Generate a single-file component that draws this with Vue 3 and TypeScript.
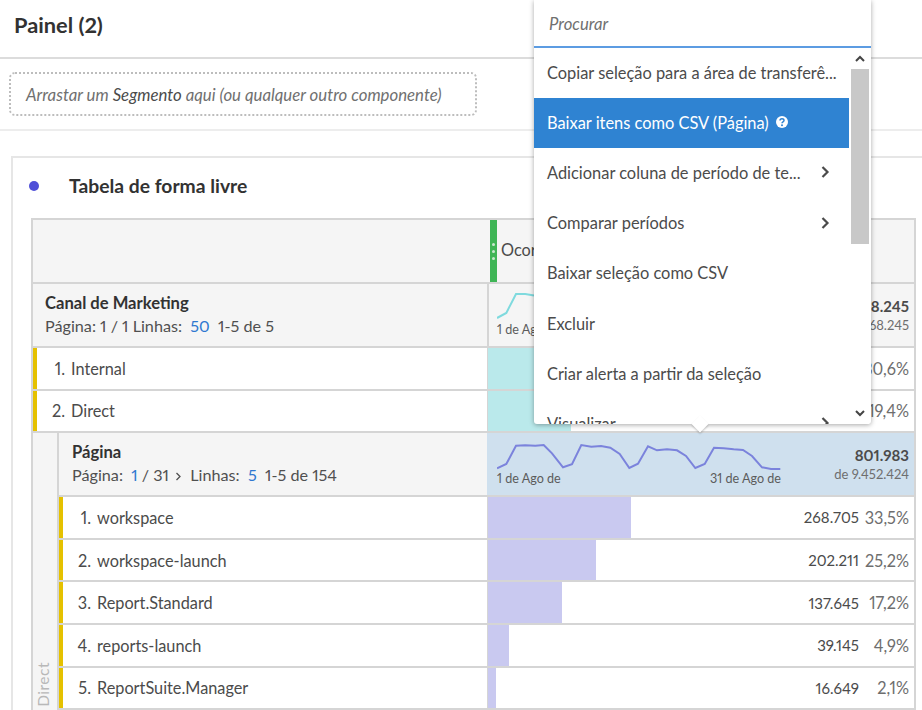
<script setup lang="ts">
interface Row {
  n: number
  label: string
  bar: number
  value?: string
  pct: string
}

const channelRows: Row[] = [
  { n: 1, label: 'Internal', bar: 131, pct: '30,6%' },
  { n: 2, label: 'Direct', bar: 83, pct: '19,4%' }
]

const pageRows: Row[] = [
  { n: 1, label: 'workspace', bar: 143, value: '268.705', pct: '33,5%' },
  { n: 2, label: 'workspace-launch', bar: 108, value: '202.211', pct: '25,2%' },
  { n: 3, label: 'Report.Standard', bar: 74, value: '137.645', pct: '17,2%' },
  { n: 4, label: 'reports-launch', bar: 21, value: '39.145', pct: '4,9%' },
  { n: 5, label: 'ReportSuite.Manager', bar: 8, value: '16.649', pct: '2,1%' }
]

const menu = [
  { label: 'Copiar seleção para a área de transferê...' },
  { label: 'Baixar itens como CSV (Página)', active: true, help: true },
  { label: 'Adicionar coluna de período de te...', more: true },
  { label: 'Comparar períodos', more: true },
  { label: 'Baixar seleção como CSV' },
  { label: 'Excluir' },
  { label: 'Criar alerta a partir da seleção' },
  { label: 'Visualizar', more: true }
]

const pageSpark = '0,35.3 9.3,31 19,12.7 28.3,12.3 38.3,12.7 46.7,12 55,20.3 66,34.3 75,31.3 84.3,12 94.3,13.7 104,13 113.3,14.7 122.7,21 132.3,35 141,30.7 151,13.3 160,17.3 170,16.3 180,17.3 189,23 198.3,35 207.7,31 217,14.7 226.7,15.3 236.7,16.3 246,17 255,23 265,34.3 274,36 283.3,36'
const channelSpark = '0,34 9.3,29 19,10 28.3,10 37,11.5'
</script>

<template>
  <div class="page">
    <header class="topbar">Painel (2)</header>

    <div class="drop-section">
      <div class="dropzone">Arrastar um&nbsp;<b>Segmento</b>&nbsp;aqui (ou qualquer outro componente)</div>
    </div>

    <section class="card">
      <div class="card-title">
        <span class="dot"></span>
        <h2>Tabela de forma livre</h2>
      </div>

      <div class="table">
        <div class="row head-row">
          <div class="left"></div>
          <div class="right metric-head">
            <span class="grip"><i></i><i></i><i></i></span>
            <span class="metric-name">Ocorrências</span>
          </div>
        </div>

        <div class="row dim-row">
          <div class="left dim-cell">
            <strong>Canal de Marketing</strong>
            <p>Página: 1 / 1 Linhas:&nbsp; <a>50</a>&nbsp; 1-5 de 5</p>
          </div>
          <div class="right summary">
            <div class="spark">
              <svg width="284" height="50" viewBox="0 0 284 50">
                <polyline :points="channelSpark" fill="none" stroke="#7fdade" stroke-width="2" />
              </svg>
              <div class="spark-dates"><span>1 de Ago de</span></div>
            </div>
            <div class="totals">
              <b>1.468.245</b>
              <small>de 1.468.245</small>
            </div>
          </div>
        </div>

        <div v-for="r in channelRows" :key="r.n" class="row item-row">
          <div class="left item-cell">
            <span class="num">{{ r.n }}.</span>
            <span>{{ r.label }}</span>
          </div>
          <div class="right bar-cell">
            <span class="bar teal" :style="{ width: r.bar + 'px' }"></span>
            <span class="pct">{{ r.pct }}</span>
          </div>
        </div>

        <div class="nested">
          <div class="side"><span>Direct</span></div>
          <div class="nested-body">
            <div class="row dim-row sub">
              <div class="left dim-cell">
                <strong>Página</strong>
                <p>
                  Página:&nbsp; <a>1</a>&nbsp;/ 31
                  <svg class="caret" width="7" height="9" viewBox="0 0 7 9"><path d="M1.5 1l3.5 3.5L1.500 8" fill="none" stroke="#505050" stroke-width="1.300" /></svg>
                  Linhas:&nbsp; <a>5</a>&nbsp; 1-5 de 154
                </p>
              </div>
              <div class="right summary blue">
                <div class="spark">
                  <svg width="284" height="50" viewBox="0 0 284 50">
                    <polyline :points="pageSpark" fill="none" stroke="#7b83dc" stroke-width="2" />
                  </svg>
                  <div class="spark-dates"><span>1 de Ago de</span><span>31 de Ago de</span></div>
                </div>
                <div class="totals">
                  <b>801.983</b>
                  <small>de 9.452.424</small>
                </div>
              </div>
            </div>

            <div v-for="r in pageRows" :key="r.n" class="row item-row">
              <div class="left item-cell">
                <span class="num">{{ r.n }}.</span>
                <span>{{ r.label }}</span>
              </div>
              <div class="right bar-cell">
                <span class="bar violet" :style="{ width: r.bar + 'px' }"></span>
                <span class="val">{{ r.value }}</span>
                <span class="pct">{{ r.pct }}</span>
              </div>
            </div>
          </div>
        </div>
      </div>
    </section>

    <div class="popover">
      <div class="search">Procurar</div>
      <div class="menu-wrap">
        <ul class="menu">
          <li v-for="m in menu" :key="m.label" :class="{ active: m.active }">
            <span class="menu-label">{{ m.label }}</span>
            <svg v-if="m.help" class="help" width="14" height="14" viewBox="0 0 14 14">
              <circle cx="7" cy="7" r="6" fill="#fff" />
              <path d="M5 5.500c0-1.200 1-1.800 2-1.800s2 .6 2 1.700c0 1.500-2 1.400-2 2.800" fill="none" stroke="#2f83d2" stroke-width="1.500" />
              <circle cx="7" cy="10.300" r="1" fill="#2f83d2" />
            </svg>
            <svg v-if="m.more" class="chev" width="10" height="14" viewBox="0 0 10 14"><path d="M1.500 2L6.500 7l-5 5" fill="none" stroke="#4b4b4b" stroke-width="2.200" /></svg>
          </li>
        </ul>
        <div class="scrollbar">
          <svg class="sb-arrow" width="12" height="8" viewBox="0 0 12 8"><path d="M2 6l4-4 4 4" fill="none" stroke="#444" stroke-width="2" /></svg>
          <div class="track"><div class="thumb"></div></div>
          <svg class="sb-arrow" width="12" height="8" viewBox="0 0 12 8"><path d="M2 2l4 4 4-4" fill="none" stroke="#444" stroke-width="2" /></svg>
        </div>
      </div>
      <span class="tip"></span>
    </div>
  </div>
</template>

<style>
html, body {
  margin: 0;
  background: #fff;
  overflow: hidden;
}
</style>

<style scoped>
.page {
  position: relative;
  width: 922px;
  height: 710px;
  overflow: hidden;
  background: #fff;
  color: #4b4b4b;
  font-family: Lato, "Open Sans", sans-serif;
  font-size: 16.3px;
  font-variant-numeric: proportional-nums;
}

.topbar {
  height: 59px;
  box-sizing: border-box;
  padding: 11px 0 0 14px;
  border-bottom: 2px solid #dcdcdc;
  font-size: 21.8px;
  font-weight: 700;
  color: #323232;
}

.drop-section {
  height: 72px;
  box-sizing: border-box;
  padding: 13px 445px 0 9px;
  border-bottom: 2px solid #ededed;
}

.dropzone {
  height: 44px;
  box-sizing: border-box;
  display: flex;
  align-items: center;
  padding-left: 15px;
  border: 2px dotted #bdbdbd;
  border-radius: 6px;
  font-style: italic;
  font-size: 16.800px;
  color: #707070;
  white-space: pre;
}

.dropzone b {
  font-weight: 400;
  color: #4b4b4b;
}

.card {
  margin: 25px 0 0 11px;
  border: 2px solid #e6e6e6;
  border-right: 0;
  padding: 0 0 0 18px;
}

.card-title {
  height: 60px;
  box-sizing: border-box;
  display: flex;
  align-items: center;
  padding-bottom: 5px;
}

.dot {
  width: 10px;
  height: 10px;
  border-radius: 50%;
  background: #4f4fd8;
  margin: 0 30px 0 -2px;
}

h2 {
  margin: 0;
  font-size: 19.300px;
  font-weight: 700;
  color: #323232;
}

.table {
  width: 885px;
  border: 2px solid #d5d5d5;
  border-bottom: 0;
  box-sizing: border-box;
}

.row {
  display: flex;
  border-bottom: 2px solid #d5d5d5;
}

.left {
  flex: 1;
  min-width: 0;
  box-sizing: border-box;
}

.right {
  width: 427px;
  flex-shrink: 0;
  box-sizing: border-box;
  border-left: 2px solid #d5d5d5;
}

.head-row {
  height: 64px;
  box-sizing: border-box;
  background: #f5f5f5;
}

.metric-head {
  display: flex;
  border-left: 0;
  padding-left: 3px;
}

.grip {
  width: 7px;
  background: #3fb556;
  display: flex;
  flex-direction: column;
  justify-content: center;
  align-items: center;
  gap: 4px;
}

.grip i {
  width: 3px;
  height: 3px;
  border-radius: 50%;
  background: #c8e8ce;
}

.metric-name {
  margin: 20px 0 0 4px;
}

.dim-row {
  height: 64px;
  box-sizing: border-box;
  background: #f5f5f5;
}

.dim-cell {
  padding: 9px 0 0 12px;
}

.sub .dim-cell {
  padding-left: 13px;
}

.dim-cell strong {
  display: block;
  font-size: 16.600px;
  color: #323232;
  line-height: 20px;
}

.dim-cell p {
  margin: 3px 0 0;
  font-size: 16.200px;
  line-height: 20px;
  color: #505050;
  white-space: nowrap;
}

.dim-cell a {
  color: #2f78d0;
}

.caret {
  margin: 0 4px 0 2px;
}

.summary {
  display: flex;
  justify-content: space-between;
  padding: 0 5px 0 8px;
}

.summary.blue {
  background: #cfe0ee;
  border-left-color: #cfe0ee;
}

.spark {
  width: 284px;
  position: relative;
}

.spark svg {
  display: block;
}

.spark-dates {
  position: absolute;
  left: 0;
  right: 0;
  top: 38px;
  display: flex;
  justify-content: space-between;
  font-size: 12.600px;
  line-height: 16px;
  color: #5c5c5c;
}

.totals {
  display: flex;
  flex-direction: column;
  align-items: flex-end;
  padding-top: 12px;
  white-space: nowrap;
}

.totals b {
  font-size: 15px;
  line-height: 21px;
  color: #4b4b4b;
}

.totals small {
  font-size: 13px;
  line-height: 15px;
  margin-top: 1px;
  color: #6e6e6e;
}

.item-row {
  height: 42.600px;
  box-sizing: border-box;
}

.nested-body .item-row:last-child {
  height: 42px;
}

.item-cell {
  display: flex;
  align-items: center;
  border-left: 4px solid #e5c100;
  background: #fff;
}

.num {
  width: 28px;
  margin-right: 6px;
  text-align: right;
}

.bar-cell {
  display: flex;
  align-items: center;
  justify-content: flex-end;
  position: relative;
  padding-right: 5px;
}

.bar {
  position: absolute;
  left: -1px;
  top: 0;
  bottom: 0;
}

.teal {
  background: #bae9eb;
}

.violet {
  background: #c9c9f0;
}

.val {
  position: relative;
  font-size: 15px;
}

.pct {
  position: relative;
  width: 50px;
  text-align: right;
  color: #6e6e6e;
}

.nested {
  display: flex;
}

.side {
  width: 26px;
  flex-shrink: 0;
  background: #f5f5f5;
  display: flex;
  align-items: flex-end;
  justify-content: center;
  border-right: 2px solid #d5d5d5;
  box-sizing: border-box;
  padding-right: 5px;
}

.side span {
  writing-mode: vertical-rl;
  transform: rotate(180deg);
  font-size: 15.500px;
  letter-spacing: 0.5px;
  color: #b8b8b8;
  padding-top: 3px;
}

.nested-body {
  flex: 1;
  min-width: 0;
}

.popover {
  position: absolute;
  left: 534px;
  top: 0;
  width: 337px;
  height: 424px;
  background: #fff;
  border-radius: 0 0 3px 3px;
  box-shadow: 0 1px 5px rgba(0, 0, 0, 0.35);
}

.search {
  height: 48px;
  box-sizing: border-box;
  padding: 14px 0 0 15px;
  border-bottom: 2px solid #5c9ce2;
  font-style: italic;
  font-size: 16.700px;
  color: #707070;
}

.menu-wrap {
  position: relative;
  height: 376px;
  overflow: hidden;
  border-radius: 0 0 3px 3px;
}

.menu {
  list-style: none;
  margin: 0;
  padding: 0;
  width: 315px;
}

.menu li {
  height: 50.200px;
  box-sizing: border-box;
  display: flex;
  align-items: center;
  padding: 0 18px 2px 13px;
  white-space: nowrap;
  color: #4b4b4b;
  font-size: 16.400px;
}

.menu li.active {
  background: #2f83d2;
  color: #fff;
}

.menu-label {
  flex: none;
}

.help {
  margin-left: 6px;
}

.chev {
  margin-left: auto;
}

.scrollbar {
  position: absolute;
  right: 2px;
  top: 0;
  bottom: 0;
  width: 18px;
  display: flex;
  flex-direction: column;
  align-items: center;
  justify-content: space-between;
  padding: 7px 0;
  box-sizing: border-box;
  background: #fff;
}

.track {
  position: absolute;
  top: 21px;
  left: 0;
  right: 0;
}

.thumb {
  height: 175px;
  background: #c8c8c8;
}

.tip {
  position: absolute;
  left: 160px;
  bottom: -6px;
  width: 12px;
  height: 12px;
  background: #fff;
  transform: rotate(45deg);
  box-shadow: 1px 1px 2px rgba(0, 0, 0, 0.2);
}
</style>
